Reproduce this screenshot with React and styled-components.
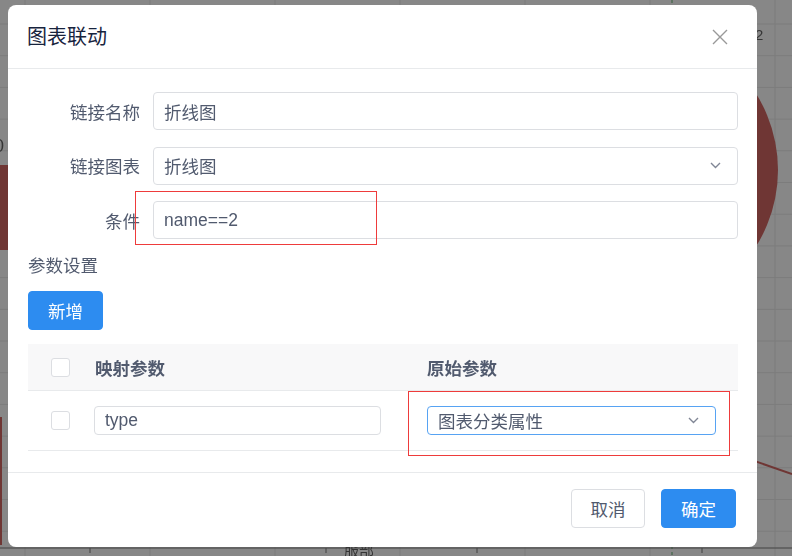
import React from 'react';
import styled, { createGlobalStyle } from 'styled-components';

const GlobalStyle = createGlobalStyle`
  html, body {
    margin: 0;
    padding: 0;
    width: 792px;
    height: 556px;
    overflow: hidden;
    background: #fff;
    font-family: "Liberation Sans", "Noto Sans CJK SC", sans-serif;
  }
`;

const text = '#515a6e';
const border = '#dcdee2';
const primary = '#2d8cf0';

const ChartLayer = styled.svg`
  position: fixed;
  left: 0;
  top: 0;
`;

const Mask = styled.div`
  position: fixed;
  inset: 0;
  background: rgba(55, 55, 55, 0.6);
`;

const Modal = styled.div`
  position: fixed;
  left: 8px;
  top: 5px;
  width: 749px;
  background: #fff;
  border-radius: 8px;
  display: flex;
  flex-direction: column;
`;

const Header = styled.div`
  height: 63px;
  padding: 0 29px 0 19px;
  border-bottom: 1px solid #e8eaec;
  display: flex;
  align-items: center;
  justify-content: space-between;
`;

const Title = styled.div`
  font-size: 20px;
  color: #17233d;
  margin-top: -2px;
`;

const CloseButton = styled.button`
  border: none;
  background: transparent;
  padding: 0;
  width: 16px;
  height: 16px;
  display: flex;
  cursor: pointer;
`;

const Body = styled.div`
  padding: 23px 19px 21px 20px;
  display: flex;
  flex-direction: column;
`;

const FormRow = styled.div`
  display: flex;
  align-items: center;
  margin-bottom: ${(p) => p.$gap ?? 16.5}px;
`;

const Label = styled.label`
  width: 125px;
  box-sizing: border-box;
  padding-right: 13px;
  text-align: right;
  font-size: 17.5px;
  color: ${text};
  flex-shrink: 0;
`;

const Field = styled.div`
  flex: 1;
  height: ${(p) => (p.$small ? 29 : 38)}px;
  width: ${(p) => (p.$width ? `${p.$width}px` : 'auto')};
  box-sizing: border-box;
  border: 1px solid ${(p) => (p.$focus ? '#57a3f3' : border)};
  border-radius: 4px;
  padding: 0 16px 0 ${(p) => (p.$small ? 10 : 10)}px;
  display: flex;
  align-items: center;
  justify-content: space-between;
  font-size: 17.5px;
  color: ${text};
  background: #fff;
`;

const SectionTitle = styled.div`
  font-size: 17.5px;
  line-height: 24px;
  color: ${text};
  margin-bottom: 13px;
`;

const Button = styled.button`
  height: 39px;
  width: ${(p) => p.$width ?? 75}px;
  border-radius: 4px;
  border: 1px solid ${(p) => (p.$primary ? primary : border)};
  background: ${(p) => (p.$primary ? primary : '#fff')};
  color: ${(p) => (p.$primary ? '#fff' : text)};
  font-family: inherit;
  font-size: 17.5px;
  padding: 0;
  cursor: pointer;
`;

const AddRow = styled.div`
  display: flex;
  margin-bottom: 14px;
`;

const Table = styled.div`
  display: flex;
  flex-direction: column;
`;

const TableRow = styled.div`
  display: grid;
  grid-template-columns: 52px 332px 1fr;
  align-items: center;
  height: ${(p) => (p.$head ? 46 : 59)}px;
  background: ${(p) => (p.$head ? '#f8f8f9' : '#fff')};
  border-bottom: 1px solid #e8eaec;
`;

const Cell = styled.div`
  padding-left: ${(p) => p.$pad ?? 15}px;
  font-size: 17.5px;
  font-weight: ${(p) => (p.$head ? 700 : 400)};
  color: ${text};
  display: flex;
  align-items: center;
`;

const Checkbox = styled.span`
  width: 19px;
  height: 19px;
  box-sizing: border-box;
  border: 1px solid ${border};
  border-radius: 3px;
  background: #fff;
  display: inline-block;
`;

const Footer = styled.div`
  border-top: 1px solid #e8eaec;
  padding: 16px 21px 19px;
  display: flex;
  justify-content: flex-end;
  gap: 16px;
`;

const Annotation = styled.div`
  position: absolute;
  border: 1px solid #ee3b3b;
  pointer-events: none;
`;

const Chevron = () => (
  <svg width="11" height="7" viewBox="0 0 11 7">
    <path d="M1 1l4.5 4.5L10 1" fill="none" stroke="#808695" strokeWidth="1.4" />
  </svg>
);

function ChartBackground() {
  const vLines = [25, 150, 275, 400, 525, 650, 775];
  const hLines = Array.from({ length: 18 }, (_, i) => 24 + i * 31.7);
  return (
    <ChartLayer width="792" height="556">
      {vLines.map((x) => (
        <line key={`v${x}`} x1={x} y1="0" x2={x} y2="556" stroke="#e3e3e3" />
      ))}
      {hLines.map((y) => (
        <line key={`h${y}`} x1="0" y1={y} x2="792" y2={y} stroke="#e3e3e3" />
      ))}
      <circle cx="634" cy="170" r="144" fill="#c23531" />
      <rect x="0" y="165" width="10" height="85" fill="#c23531" />
      <text x="-6" y="152" fontSize="18" fill="#333" fontFamily="Liberation Sans">0</text>
      <line x1="1" y1="417" x2="1" y2="545" stroke="#c23531" strokeWidth="2" />
      <line x1="740" y1="456" x2="792" y2="474" stroke="#c23531" strokeWidth="2" />
      <line x1="672" y1="0" x2="672" y2="556" stroke="#2f9e44" strokeDasharray="3 3" />
      <line x1="0" y1="548" x2="792" y2="548" stroke="#555" />
      {[90, 326, 477, 702].map((x) => (
        <line key={`t${x}`} x1={x} y1="548" x2={x} y2="553" stroke="#555" />
      ))}
      <text x="344" y="556" fontSize="15" fill="#333" fontFamily="Noto Sans CJK SC">服部</text>
      <text x="755" y="40" fontSize="15" fill="#333" fontFamily="Liberation Sans">2</text>
    </ChartLayer>
  );
}

export default function App() {
  return (
    <>
      <GlobalStyle />
      <ChartBackground />
      <Mask />
      <Modal>
        <Header>
          <Title>图表联动</Title>
          <CloseButton aria-label="关闭">
            <svg width="16" height="16" viewBox="0 0 16 16">
              <path d="M1 1l14 14M15 1L1 15" stroke="#999" strokeWidth="1.4" fill="none" />
            </svg>
          </CloseButton>
        </Header>
        <Body>
          <FormRow>
            <Label>链接名称</Label>
            <Field>折线图</Field>
          </FormRow>
          <FormRow>
            <Label>链接图表</Label>
            <Field>
              折线图
              <Chevron />
            </Field>
          </FormRow>
          <FormRow $gap={15}>
            <Label>条件</Label>
            <Field>name==2</Field>
          </FormRow>
          <SectionTitle>参数设置</SectionTitle>
          <AddRow>
            <Button $primary>新增</Button>
          </AddRow>
          <Table>
            <TableRow $head>
              <Cell $pad={23}>
                <Checkbox />
              </Cell>
              <Cell $head>映射参数</Cell>
              <Cell $head>原始参数</Cell>
            </TableRow>
            <TableRow>
              <Cell $pad={23}>
                <Checkbox />
              </Cell>
              <Cell $pad={14}>
                <Field $small $width={287} style={{ flex: 'none' }}>type</Field>
              </Cell>
              <Cell>
                <Field $small $focus $width={289} style={{ flex: 'none' }}>
                  图表分类属性
                  <Chevron />
                </Field>
              </Cell>
            </TableRow>
          </Table>
        </Body>
        <Footer>
          <Button $width={74}>取消</Button>
          <Button $primary>确定</Button>
        </Footer>
        <Annotation style={{ left: 127, top: 186, width: 240, height: 52 }} />
        <Annotation style={{ left: 400, top: 386, width: 320, height: 63 }} />
      </Modal>
    </>
  );
}
